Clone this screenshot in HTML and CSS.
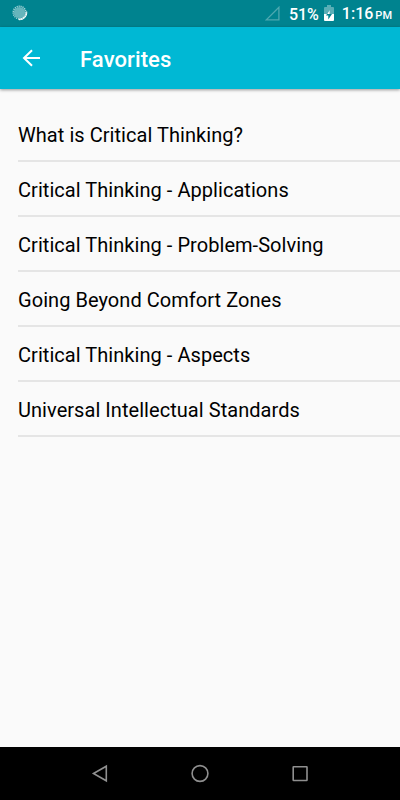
FILE: index.html
```html
<!DOCTYPE html>
<html lang="en">
<head>
  <meta charset="UTF-8" />
  <meta name="viewport" content="width=device-width, initial-scale=1.0"/>
  <title>Favorites</title>
  <link rel="stylesheet" href="styles.css">
</head>
<body>

  <div class="status-bar">
    <svg class="sync" width="16" height="16" viewBox="0 0 16 16">
      <path d="M14.4 6.5A7 7 0 0 1 6.5 14.3" fill="none" stroke="#fff" stroke-width="1.6"/>
      <circle cx="7.5" cy="7.5" r="5.6" fill="#66b5bc"/>
      <circle cx="7.5" cy="7.5" r="6.3" fill="none" stroke="#a3d2d6" stroke-width="1.5" stroke-dasharray="1.2 .8"/>
    </svg>
    <svg class="signal" width="15" height="15" viewBox="0 0 15 15">
      <path d="M1.3 13.9H13.9V1.3Z" fill="none" stroke="#4da8b0" stroke-width="1.3"/>
    </svg>
    <span class="battery-text">51%</span>
    <svg class="battery" width="10" height="17" viewBox="0 0 10 17">
      <path d="M3 0h4v2h2q1 0 1 1v6H0V3q0-1 1-1h2z" fill="#5aaeb6"/>
      <path d="M0 9h10v6q0 1-1 1H1q-1 0-1-1z" fill="#fff"/>
      <path d="M5.7 5v4H8L4.3 14.5V10.5H2z" fill="#00838f"/>
      <path d="M5.7 5v4H3.2z" fill="#fff"/>
    </svg>
    <span class="clock"><span>1:16</span><small>PM</small></span>
  </div>

  <header class="toolbar">
    <svg class="back" width="20" height="20" viewBox="0 0 20 20">
      <path d="M19 10H3M11 2.2L3 10L11 17.8" fill="none" stroke="#fff" stroke-width="2"/>
    </svg>
    <h1>Favorites</h1>
  </header>

  <main>
    <ul class="favorites">
      <li>What is Critical Thinking?</li>
      <li>Critical Thinking - Applications</li>
      <li>Critical Thinking - Problem-Solving</li>
      <li>Going Beyond Comfort Zones</li>
      <li>Critical Thinking - Aspects</li>
      <li>Universal Intellectual Standards</li>
    </ul>
  </main>

  <nav class="nav-bar">
    <svg width="20" height="20" viewBox="0 0 20 20">
      <path d="M3.5 9.5L16.3 2.2V16.8Z"/>
    </svg>
    <svg width="20" height="20" viewBox="0 0 20 20">
      <circle cx="10" cy="9.5" r="7.9"/>
    </svg>
    <svg width="20" height="20" viewBox="0 0 20 20">
      <rect x="3.2" y="2.7" width="13.8" height="13.8" rx=".4"/>
    </svg>
  </nav>

</body>
</html>
```

FILE: styles.css
```css
* {
  box-sizing: border-box;
}
body {
  margin: 0;
  height: 800px;
  display: flex;
  flex-direction: column;
  font-family: Roboto, "Liberation Sans", sans-serif;
  background: #fafafa;
  overflow: hidden;
}
.status-bar {
  height: 27px;
  display: flex;
  align-items: center;
  padding: 0 8px 0 12px;
  background: #00838f;
  color: #fff;
  font-size: 16px;
  font-weight: 500;
  line-height: 27px;
  white-space: nowrap;
}
.sync {
  margin-top: -1px;
}
.signal {
  margin-left: auto;
}
.battery-text {
  margin: 2px 5px 0 9px;
}
.clock {
  display: flex;
  align-items: baseline;
  gap: 2px;
  margin: 2px 0 0 8px;
}
.clock small {
  font-size: 11px;
}
.toolbar {
  height: 62px;
  display: flex;
  align-items: center;
  padding-left: 21px;
  background: #00b8d4;
  color: #fff;
  box-shadow: 0 1px 3px rgba(0, 0, 0, 0.4);
}
.toolbar h1 {
  margin: 2px 0 0 39px;
  font-size: 22px;
  font-weight: 500;
  letter-spacing: 0.1px;
}
main {
  flex: 1;
  padding: 18px 0 0 18px;
}
.favorites {
  list-style: none;
  margin: 0;
  padding: 0;
}
.favorites li {
  height: 55px;
  padding-top: 1px;
  border-bottom: 2px solid #e5e5e5;
  color: #000;
  font-size: 20px;
  letter-spacing: 0.05px;
  line-height: 54px;
}
.nav-bar {
  height: 53px;
  display: flex;
  justify-content: space-between;
  align-items: center;
  padding: 0 90px;
  background: #000;
}
.nav-bar svg {
  fill: none;
  stroke: #8f8f8f;
  stroke-width: 1.6;
}
```
